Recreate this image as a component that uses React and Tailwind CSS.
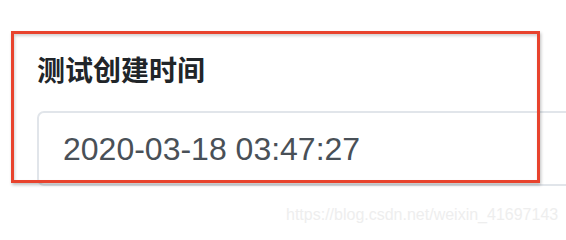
export default function App() {
  return (
    <div className="relative w-[566px] h-[234px] overflow-hidden bg-white">
      <div className="pl-[37px] pt-[48px]">
        <div
          className="text-[28px] leading-[42px] font-semibold text-[#212529]"
          style={{ fontFamily: '"Noto Sans CJK SC", "Noto Sans", sans-serif' }}
        >
          测试创建时间
        </div>
        <div className="mt-[21px] w-[620px] h-[75px] border-2 border-[#e1e5ea] rounded-[7px] flex items-center pl-[24px]">
          <span
            className="text-[32px] text-[#495057] leading-none"
            style={{ fontFamily: '"Liberation Sans", Arial, sans-serif' }}
          >
            2020-03-18 03:47:27
          </span>
        </div>
      </div>
      <div
        className="absolute left-[286px] top-[203px] text-[16px] leading-[24px] text-[#eeeeee]"
        style={{ fontFamily: '"Liberation Sans", Arial, sans-serif' }}
      >
        https://blog.csdn.net/weixin_41697143
      </div>
      <div className="absolute left-[11px] top-[31px] w-[529px] h-[152px] border-[3px] border-[#e8432d] shadow-[1px_2px_3px_rgba(0,0,0,0.25),inset_1px_2px_3px_rgba(0,0,0,0.18)]" />
    </div>
  );
}
